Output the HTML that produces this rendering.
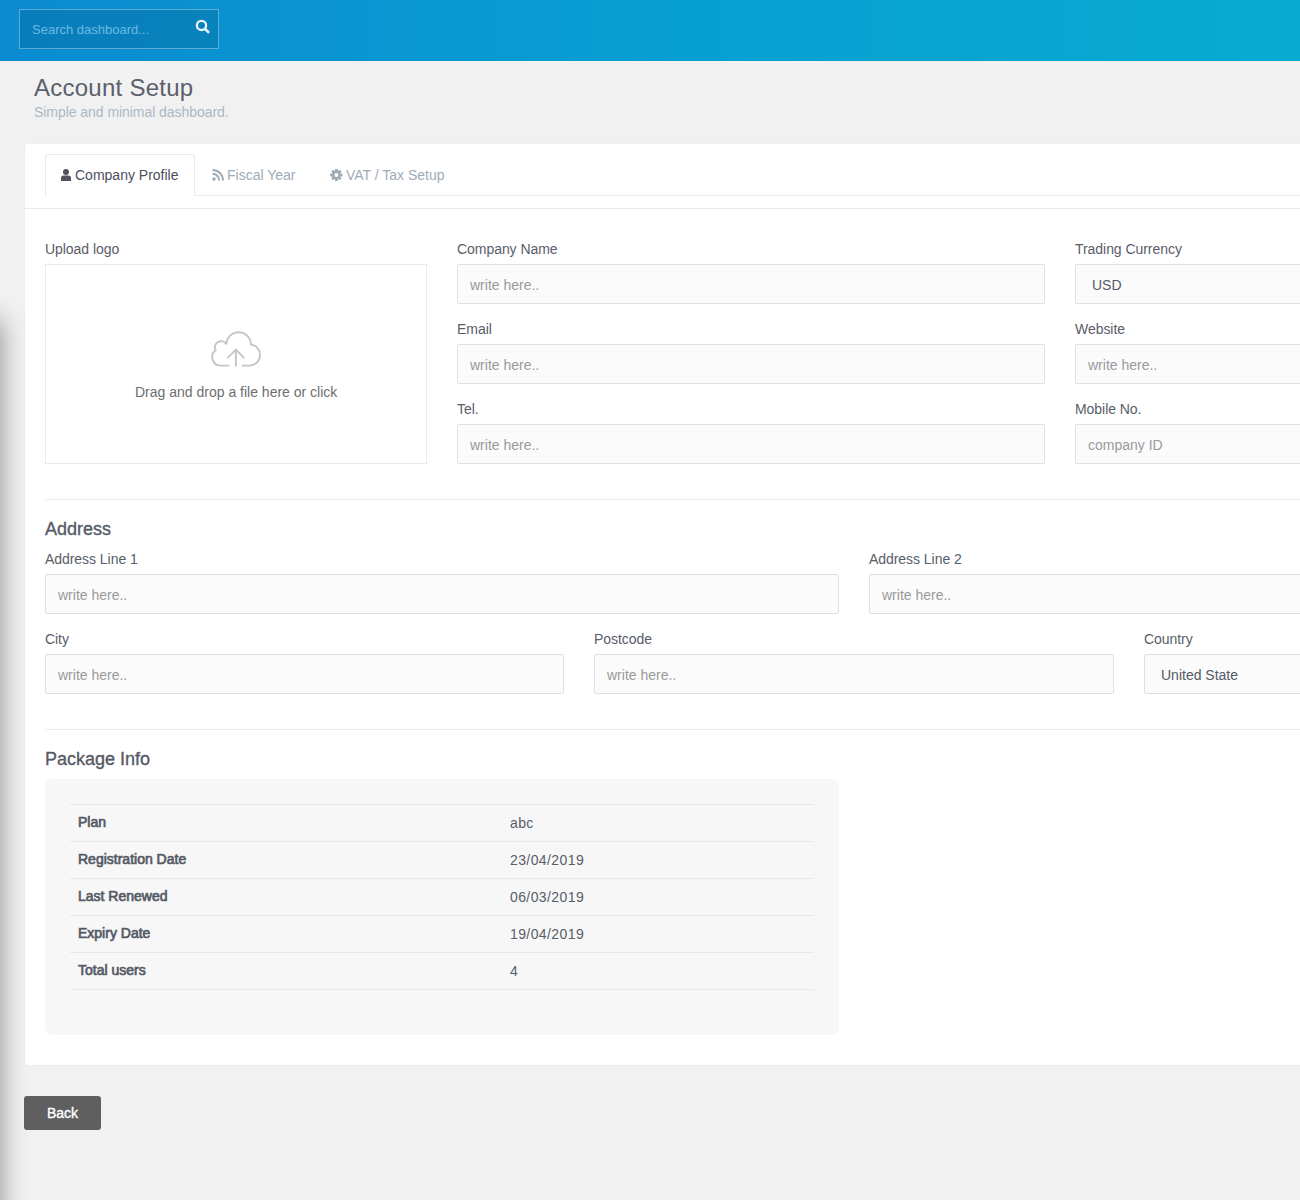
<!DOCTYPE html>
<html><head><meta charset="utf-8">
<style>
*{box-sizing:border-box;margin:0;padding:0}
html,body{width:1300px;height:1200px;overflow:hidden;background:#f1f1f1;font-family:"Liberation Sans",sans-serif;}
.a{position:absolute}
.t{position:absolute;white-space:nowrap;line-height:1;}
#hdr{left:0;top:0;width:1300px;height:61px;background:linear-gradient(to right,#0b8bd1 0%,#08a0d2 55%,#07abd0 100%);}
#srch{left:19px;top:9px;width:200px;height:40px;background:rgba(0,0,0,0.1);border:1px solid rgba(255,255,255,0.35);}
#card{left:25px;top:144px;width:1400px;height:921px;background:#fff;border-radius:2px;box-shadow:0 0 1px rgba(0,0,0,0.12);}
.lbl{font-size:14px;color:#585d69;letter-spacing:-0.05px}
.inp{position:absolute;height:40px;background:#fbfbfc;border:1px solid #dfdfe6;border-radius:2px;}
.ph{font-size:14px;color:#9a9a9a}
.sep{position:absolute;height:1px;background:#eceef1}
.h{font-size:18px;color:#555a66;-webkit-text-stroke:0.35px #555a66}
.tl{font-size:14px;color:#555a66;-webkit-text-stroke:0.7px #555a66}
.tv{font-size:14px;color:#585d68;letter-spacing:0.4px}
.rl{position:absolute;left:70px;width:744px;height:1px;background:#e5e8ec}
</style></head><body>
<div id="hdr" class="a"></div>
<div id="srch" class="a"></div>
<div class="t" style="left:32px;top:23px;font-size:13px;color:#6cb9e2">Search dashboard...</div>
<svg class="a" style="left:195px;top:19px" width="15" height="15" viewBox="0 0 15 15"><circle cx="6.5" cy="6.4" r="4.6" fill="none" stroke="#eaf3fa" stroke-width="2.3"/><path d="M10 9.9 L13.2 13" stroke="#eaf3fa" stroke-width="2.6" stroke-linecap="round"/></svg>

<div class="t" style="left:34px;top:76px;font-size:24px;letter-spacing:0.25px;color:#5a606c">Account Setup</div>
<div class="t" style="left:34px;top:105px;font-size:14px;letter-spacing:-0.05px;color:#acb8c5">Simple and minimal dashboard.</div>

<div class="a" style="left:-60px;top:320px;width:60px;height:1200px;box-shadow:0 0 27px 0 rgba(0,0,0,0.43)"></div>
<div id="card" class="a"></div>
<!-- tabs -->
<div class="a" style="left:45px;top:154px;width:150px;height:42px;background:#fff;border:1px solid #e6e9ed;border-bottom:none;border-radius:4px 4px 0 0"></div>
<div class="sep" style="left:195px;top:195px;width:1105px;background:#e6e9ec"></div>
<div class="sep" style="left:25px;top:208px;width:1275px;background:#e8ebee"></div>
<svg class="a" style="left:61px;top:169px" width="10" height="12" viewBox="0 0 10 12"><circle cx="5" cy="3" r="3" fill="#4e535d"/><path d="M0 12 V9 Q0 6.5 2.5 6.5 H7.5 Q10 6.5 10 9 V12 Z" fill="#4e535d"/></svg>
<div class="t" style="left:75px;top:168px;font-size:14px;color:#4a4f5b">Company Profile</div>
<svg class="a" style="left:212px;top:169px" width="12" height="12" viewBox="0 0 12 12"><circle cx="2" cy="10" r="1.8" fill="#9eabb8"/><path d="M0.5 4.8 A6.7 6.7 0 0 1 7.2 11.5" fill="none" stroke="#9eabb8" stroke-width="2"/><path d="M0.5 0.9 A10.6 10.6 0 0 1 11.1 11.5" fill="none" stroke="#9eabb8" stroke-width="2"/></svg>
<div class="t" style="left:227px;top:168px;font-size:14px;color:#9eabb8">Fiscal Year</div>
<svg class="a" style="left:330px;top:169px" width="13" height="12" viewBox="0 0 13 12"><g fill="#9eabb5"><circle cx="6.4" cy="6" r="4.4"/><rect x="5" y="0" width="2.8" height="12"/><rect x="0.2" y="4.6" width="12.4" height="2.8"/><rect x="5" y="0" width="2.8" height="12" transform="rotate(45 6.4 6)"/><rect x="5" y="0" width="2.8" height="12" transform="rotate(-45 6.4 6)"/></g><circle cx="6.4" cy="6" r="2" fill="#fff"/></svg>
<div class="t" style="left:346px;top:168px;font-size:14px;color:#9eabb8">VAT / Tax Setup</div>

<!-- row 1 -->
<div class="t lbl" style="left:45px;top:242px">Upload logo</div>
<div class="a" style="left:45px;top:264px;width:382px;height:200px;border:1px solid #e8ebef;background:#fff"></div>
<svg class="a" style="left:200px;top:325px" width="70" height="50" viewBox="0 0 70 50"><path d="M29.6 40.6 H20.3 A8.5 8.5 0 0 1 15.6 25.3 A5.9 5.9 0 0 1 26.4 19.4 A12.2 12.2 0 0 1 50.9 19.5 A10.6 10.6 0 0 1 49.2 40.6 H42" fill="none" stroke="#c6c6c6" stroke-width="1.9"/><path d="M35.9 41.5 V25 M27.4 33.1 L35.9 24.6 L44.3 33.1" fill="none" stroke="#c6c6c6" stroke-width="1.9"/></svg>
<div class="t" style="left:135px;top:385px;font-size:14px;color:#6c6e72">Drag and drop a file here or click</div>

<div class="t lbl" style="left:457px;top:242px">Company Name</div>
<div class="inp" style="left:457px;top:264px;width:588px"></div>
<div class="t ph" style="left:470px;top:278px">write here..</div>
<div class="t lbl" style="left:457px;top:322px">Email</div>
<div class="inp" style="left:457px;top:344px;width:588px"></div>
<div class="t ph" style="left:470px;top:358px">write here..</div>
<div class="t lbl" style="left:457px;top:402px">Tel.</div>
<div class="inp" style="left:457px;top:424px;width:588px"></div>
<div class="t ph" style="left:470px;top:438px">write here..</div>

<div class="t lbl" style="left:1075px;top:242px">Trading Currency</div>
<div class="inp" style="left:1075px;top:264px;width:600px"></div>
<div class="t" style="left:1092px;top:278px;font-size:14px;color:#555a66">USD</div>
<div class="t lbl" style="left:1075px;top:322px">Website</div>
<div class="inp" style="left:1075px;top:344px;width:600px"></div>
<div class="t ph" style="left:1088px;top:358px">write here..</div>
<div class="t lbl" style="left:1075px;top:402px">Mobile No.</div>
<div class="inp" style="left:1075px;top:424px;width:600px"></div>
<div class="t ph" style="left:1088px;top:438px">company ID</div>

<div class="sep" style="left:45px;top:499px;width:1255px;background:#ebebeb"></div>
<div class="t h" style="left:45px;top:520px">Address</div>
<div class="t lbl" style="left:45px;top:552px">Address Line 1</div>
<div class="inp" style="left:45px;top:574px;width:794px"></div>
<div class="t ph" style="left:58px;top:588px">write here..</div>
<div class="t lbl" style="left:869px;top:552px">Address Line 2</div>
<div class="inp" style="left:869px;top:574px;width:800px"></div>
<div class="t ph" style="left:882px;top:588px">write here..</div>

<div class="t lbl" style="left:45px;top:632px">City</div>
<div class="inp" style="left:45px;top:654px;width:519px"></div>
<div class="t ph" style="left:58px;top:668px">write here..</div>
<div class="t lbl" style="left:594px;top:632px">Postcode</div>
<div class="inp" style="left:594px;top:654px;width:520px"></div>
<div class="t ph" style="left:607px;top:668px">write here..</div>
<div class="t lbl" style="left:1144px;top:632px">Country</div>
<div class="inp" style="left:1144px;top:654px;width:520px"></div>
<div class="t" style="left:1161px;top:668px;font-size:14px;color:#555a66">United State</div>

<div class="sep" style="left:45px;top:729px;width:1255px;background:#ebebeb"></div>
<div class="t h" style="left:45px;top:750px">Package Info</div>
<div class="a" style="left:45px;top:779px;width:794px;height:256px;background:#f7f7f7;border-radius:8px"></div>
<div class="rl" style="top:804px"></div>
<div class="rl" style="top:841px"></div>
<div class="rl" style="top:878px"></div>
<div class="rl" style="top:915px"></div>
<div class="rl" style="top:952px"></div>
<div class="rl" style="top:989px"></div>
<div class="t tl" style="left:78px;top:815px">Plan</div>
<div class="t tv" style="left:510px;top:816px">abc</div>
<div class="t tl" style="left:78px;top:852px">Registration Date</div>
<div class="t tv" style="left:510px;top:853px">23/04/2019</div>
<div class="t tl" style="left:78px;top:889px">Last Renewed</div>
<div class="t tv" style="left:510px;top:890px">06/03/2019</div>
<div class="t tl" style="left:78px;top:926px">Expiry Date</div>
<div class="t tv" style="left:510px;top:927px">19/04/2019</div>
<div class="t tl" style="left:78px;top:963px">Total users</div>
<div class="t tv" style="left:510px;top:964px">4</div>

<div class="a" style="left:24px;top:1096px;width:77px;height:34px;background:#5f5f5f;border-radius:3px"></div>
<div class="t" style="left:47px;top:1106px;font-size:14px;color:#fff;-webkit-text-stroke:0.35px #fff">Back</div>

</body></html>
